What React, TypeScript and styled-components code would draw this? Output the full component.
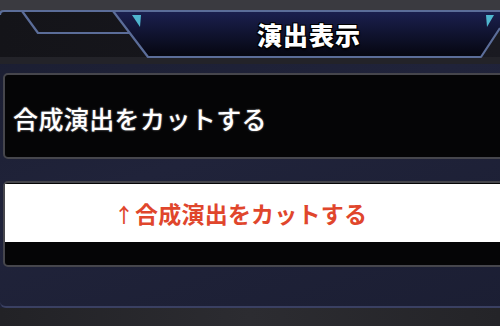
import styled, { createGlobalStyle } from "styled-components";

const GlobalStyle = createGlobalStyle`
  html, body {
    margin: 0;
    padding: 0;
    background: #1c1f33;
  }
  body {
    font-family: "Noto Sans CJK JP", "Noto Sans", sans-serif;
  }
`;

const HeaderFrame = () => (
  <FrameSvg viewBox="0 0 500 64" preserveAspectRatio="none">
    <defs>
      <linearGradient id="titleFill" x1="0" y1="0" x2="0" y2="1">
        <stop offset="0" stopColor="#1b2050" />
        <stop offset="1" stopColor="#05060f" />
      </linearGradient>
      <linearGradient id="sideFill" x1="0" y1="0" x2="1" y2="0">
        <stop offset="0" stopColor="#141419" />
        <stop offset="1" stopColor="#1a1a21" />
      </linearGradient>
    </defs>
    <rect x="0" y="0" width="500" height="11" fill="#3a3a40" />
    <rect x="0" y="11" width="500" height="46" fill="url(#sideFill)" />
    <rect x="0" y="57" width="500" height="7" fill="#232329" />
    <polygon points="113,11 500,11 500,28 481,57 148,57" fill="url(#titleFill)" />
    <g fill="none" stroke="#5b6d99" strokeWidth="2.2" strokeLinejoin="round">
      <path d="M0,15 Q0,11 4,11 L500,11" />
      <path d="M113,11 L148,57 L481,57 L500,28" />
      <path d="M22,11 L38,33 L130,33" />
    </g>
    <polygon points="132,15 141,15 140,27" fill="#4fb6cf" />
    <polygon points="486,15 494,15 487,27" fill="#4fb6cf" />
  </FrameSvg>
);

export default function App() {
  return (
    <>
      <GlobalStyle />
      <Page>
        <Header>
          <HeaderFrame />
          <Title>演出表示</Title>
        </Header>
        <Body>
          <OptionCard>
            <OptionLabel>合成演出をカットする</OptionLabel>
          </OptionCard>
          <OptionCard $selected>
            <SelectedStrip>
              <SelectedLabel>
                <Arrow>↑</Arrow>合成演出をカットする
              </SelectedLabel>
            </SelectedStrip>
          </OptionCard>
        </Body>
        <Footer />
      </Page>
    </>
  );
}

const Page = styled.div`
  width: 500px;
  height: 326px;
  overflow: hidden;
  display: flex;
  flex-direction: column;
  background: linear-gradient(160deg, #1a1d30 0%, #20233a 45%, #1b1e33 100%);
`;

const Header = styled.header`
  position: relative;
  height: 64px;
  flex-shrink: 0;
  display: flex;
  align-items: flex-start;
  justify-content: center;
  padding-left: 118px;
  box-sizing: border-box;
`;

const FrameSvg = styled.svg`
  position: absolute;
  inset: 0;
  width: 100%;
  height: 100%;
`;

const Title = styled.h1`
  position: relative;
  margin: 0;
  margin-top: 18px;
  height: 32px;
  line-height: 32px;
  font-size: 25px;
  font-weight: 900;
  letter-spacing: 1px;
  color: #ffffff;
  text-shadow:
    1px 1px 0 #000,
    -1px -1px 0 #000,
    1px -1px 0 #000,
    -1px 1px 0 #000,
    0 2px 2px #000;
`;

const Body = styled.main`
  flex: 1;
  display: flex;
  flex-direction: column;
  gap: 22px;
  padding: 9px 0 0 3px;
  border-bottom: 2px solid #3a4062;
  border-bottom-left-radius: 6px;
`;

const OptionCard = styled.div<{ $selected?: boolean }>`
  height: 86px;
  margin-right: -12px;
  box-sizing: border-box;
  border: 2px solid #46464c;
  border-radius: 5px;
  background: #050506;
  display: flex;
  flex-direction: column;
  justify-content: ${(p) => (p.$selected ? "flex-start" : "center")};
  padding: ${(p) => (p.$selected ? "1px 0 0 0" : "0 0 0 8px")};
`;

const OptionLabel = styled.span`
  font-size: 25px;
  font-weight: 500;
  color: #ffffff;
  letter-spacing: 0.4px;
  text-shadow: 0 0 2px rgba(170, 170, 170, 0.9);
  margin-top: 4px;
`;

const SelectedStrip = styled.div`
  height: 58px;
  background: #ffffff;
  display: flex;
  align-items: center;
  justify-content: center;
  padding-right: 34px;
`;

const SelectedLabel = styled.span`
  font-size: 23px;
  font-weight: 600;
  letter-spacing: 0.2px;
  color: #e0462c;
`;

const Arrow = styled.span`
  font-weight: 500;
  font-size: 20px;
  margin-right: 1px;
`;

const Footer = styled.footer`
  height: 18px;
  flex-shrink: 0;
  background: linear-gradient(90deg, #222226, #2c2c31 50%, #242428);
`;
